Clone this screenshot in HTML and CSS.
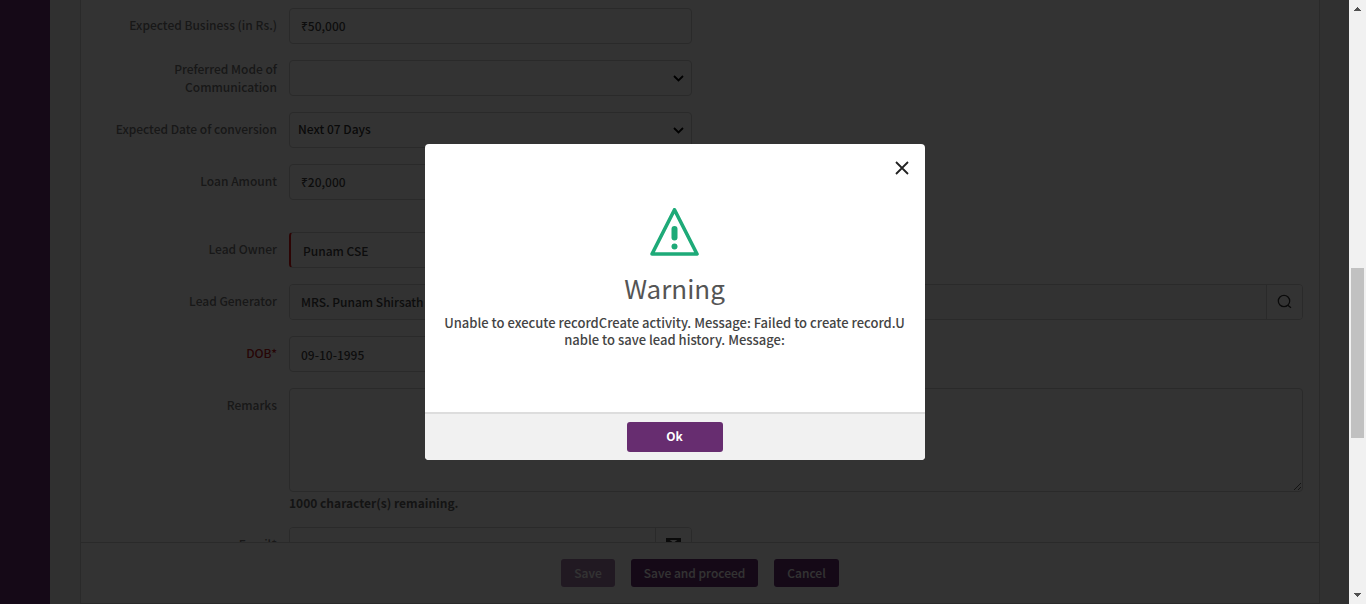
FILE: index.html
```html
<!DOCTYPE html>
<html lang="en">
<head>
<meta charset="utf-8">
<title>Lead details</title>
<link rel="stylesheet" href="styles.css">
</head>
<body>
<div class="page">
  <div class="app">
    <nav class="sidebar" aria-label="Main"></nav>
    <main class="card">
      <form class="form" id="lead">
        <div class="row"><label class="label" for="business">Expected Business (in Rs.)</label><input class="control" id="business" type="text" value="₹50,000"></div>
        <div class="row"><label class="label label-wrap" for="mode">Preferred Mode of Communication</label><select class="control" id="mode"><option></option></select></div>
        <div class="row"><label class="label" for="conversion">Expected Date of conversion</label><select class="control" id="conversion"><option>Next 07 Days</option></select></div>
        <div class="row"><label class="label" for="loan">Loan Amount</label><input class="control" id="loan" type="text" value="₹20,000"></div>
        <div class="row section"><label class="label" for="owner">Lead Owner</label><input class="control required" id="owner" type="text" value="Punam CSE"></div>
        <div class="row"><label class="label" for="generator">Lead Generator</label>
          <div class="group wide"><input class="group-input filled" id="generator" type="text" value="MRS. Punam Shirsath">
            <button class="addon" type="button" aria-label="Search"><svg width="16" height="16" viewBox="0 0 16 16" fill="none" stroke="currentColor" stroke-width="1.3"><circle cx="7" cy="7" r="5.7"/><path d="M10.8 11.2l3.2 2.6"/></svg></button></div></div>
        <div class="row"><label class="label error" for="dob">DOB*</label><input class="control" id="dob" type="text" value="09-10-1995"></div>
        <div class="row"><label class="label" for="remarks">Remarks</label>
          <div class="wide"><textarea class="control remarks" id="remarks"></textarea><p class="hint">1000 character(s) remaining.</p></div></div>
        <div class="row"><label class="label" for="email">Email*</label>
          <div class="group"><input class="group-input" id="email" type="email">
            <button class="addon mail" type="button" aria-label="Send email"><svg width="16" height="14" viewBox="0 0 16 14" fill="none" stroke="currentColor" stroke-width="2"><path d="M1 2h13v10H1zM2 3l5.5 4L13 3"/></svg></button></div></div>
      </form>
      <footer class="actions">
        <button class="btn" type="button" disabled>Save</button>
        <button class="btn" type="button">Save and proceed</button>
        <button class="btn" type="button">Cancel</button>
      </footer>
    </main>
    <div class="overlay">
      <section class="modal" role="alertdialog" aria-modal="true" aria-labelledby="title" aria-describedby="message">
        <header class="modal-head"><button class="close" type="button" aria-label="Close"><svg width="14" height="14" viewBox="0 0 14 14" fill="none" stroke="currentColor" stroke-width="1.8"><path d="M1 1l12 12M13 1L1 13"/></svg></button></header>
        <div class="modal-body">
          <svg class="warning" width="50" height="48" viewBox="0 1 50 48" fill="none" stroke="currentColor" stroke-linejoin="round" stroke-linecap="round"><path d="M24.5 2.8L47 47H2z" stroke-width="3.6"/><path d="M24.5 22v8.5" stroke-width="6"/><circle cx="24.5" cy="39.5" r="3" fill="currentColor" stroke="none"/></svg>
          <h2 class="title" id="title">Warning</h2>
          <p class="message" id="message">Unable to execute recordCreate activity. Message: Failed to create record.Unable to save lead history. Message:</p>
        </div>
        <footer class="modal-foot"><button class="ok" type="button">Ok</button></footer>
      </section>
    </div>
  </div>
  <div class="scrollbar" aria-hidden="true">
    <svg class="arrow" width="7" height="4" viewBox="0 0 7 4" fill="currentColor"><path d="M0 4V3h1V2h1V1h1V0h1v1h1v1h1v1h1v1z"/></svg>
    <div class="track"><div class="thumb"></div></div>
    <svg class="arrow" width="7" height="4" viewBox="0 0 7 4" fill="currentColor"><path d="M0 0v1h1v1h1v1h1v1h1V3h1V2h1V1h1V0z"/></svg>
  </div>
</div>
</body>
</html>
```
FILE: styles.css
```css
* { box-sizing: border-box; }
body { margin: 0; }
body, button, input, select, textarea {
  font-family: "Noto Sans CJK SC", "Noto Sans", sans-serif;
  font-size: 12px;
  line-height: 18px;
}
.page { display: flex; height: 100vh; overflow: hidden; }
.app { position: relative; display: flex; flex: 1; min-width: 0; background: #ededed; }
.sidebar { width: 50px; flex: none; background: #692d73; }
.card {
  display: flex; flex-direction: column; flex: 1; min-width: 0;
  margin: 0 29px 0 30px;
  background: #fff; border: 1px solid #d0d0d0; border-top: 0;
}
.form {
  display: flex; flex-direction: column; gap: 16px;
  flex: 1; min-height: 0; overflow: hidden;
  padding: 8px 16px 0 0;
}
.row { display: grid; grid-template-columns: 196px 1fr; column-gap: 12px; flex: none; }
.section { margin-top: 16px; }
.label { padding-top: 8px; text-align: right; font-weight: 500; color: #777; }
.label-wrap { padding: 0 0 0 64px; height: 36px; }
.error { color: #c0201c; }
.control, .group { width: 100%; max-width: 403px; height: 36px; border: 1px solid #d0d0d0; border-radius: 4px; background: #fff; }
.control { padding: 0 11px; color: #444; margin: 0; font-weight: 500; }
select.control {
  appearance: none; padding: 0 24px 2px 8px; color: #333;
  background: #fff url("data:image/svg+xml,%3Csvg xmlns='http://www.w3.org/2000/svg' width='11' height='7' fill='none' stroke='black' stroke-width='1.8'%3E%3Cpath d='M1 1l4.500 4.500L10 1'/%3E%3C/svg%3E") no-repeat right 7px center;
}
.control.required { border-left: 2px solid #e01818; padding-left: 12px; }
.wide { width: 100%; max-width: none; }
.group { display: flex; overflow: hidden; }
.group.wide { max-width: none; }
.group-input { flex: 1; min-width: 0; padding: 0 11px; border: 0; background: #fff; color: #444; font-weight: 500; }
.filled { background: #f7f7f7; }
.addon {
  display: flex; align-items: center; justify-content: center;
  width: 36px; padding: 0; border: 0; border-left: 1px solid #d0d0d0;
  background: #fff; color: #333;
}
.mail { align-items: flex-start; padding-top: 9px; }
.control.remarks { display: block; max-width: none; height: 104px; resize: vertical; }
.hint { margin: 2px 0 -1px; font-weight: 700; color: #666; }
.actions {
  display: flex; justify-content: center; align-items: center; gap: 16px;
  height: 61px; flex: none;
  border-top: 1px solid #d0d0d0;
}
.btn { height: 28px; padding: 0 13px; border: 0; border-radius: 3px; background: #692d73; color: #fff; font-weight: 500; }
.btn:disabled { background: #a47dab; }
.overlay {
  position: absolute; inset: 0;
  display: flex; align-items: center; justify-content: center;
  background: rgba(0, 0, 0, .8);
}
.modal { width: 500px; overflow: hidden; border-radius: 4px; background: #fff; text-align: center; }
.modal-head { display: flex; justify-content: flex-end; padding: 16px 15px 0; }
.close { display: flex; padding: 1px; border: 0; background: none; color: #222; }
.modal-body { padding: 32px 16px 64px; }
.warning { display: block; margin: 0 auto; color: #1eaa78; }
.title { margin: 12px 0 6px; font-size: 26px; line-height: 40px; font-weight: 400; color: #555; }
.message { margin: 0; padding: 0 2px; font-size: 13px; line-height: 17px; font-weight: 500; color: #444; word-break: break-all; }
.modal-foot { padding: 8px; border-top: 2px solid #ddd; background: #f1f1f1; }
.ok { width: 96px; height: 30px; padding: 0 0 2px; border: 0; border-radius: 3px; background: #672d70; color: #fff; font-weight: 700; }
.scrollbar {
  display: flex; flex-direction: column; align-items: center;
  width: 17px; flex: none; padding: 7px 2px;
  background: #f1f1f1; color: #505050;
}
.arrow { flex: none; }
.track { flex: 1; width: 100%; padding: 257px 0 0; }
.thumb { width: 13px; height: 170px; background: #c1c1c1; }
```
